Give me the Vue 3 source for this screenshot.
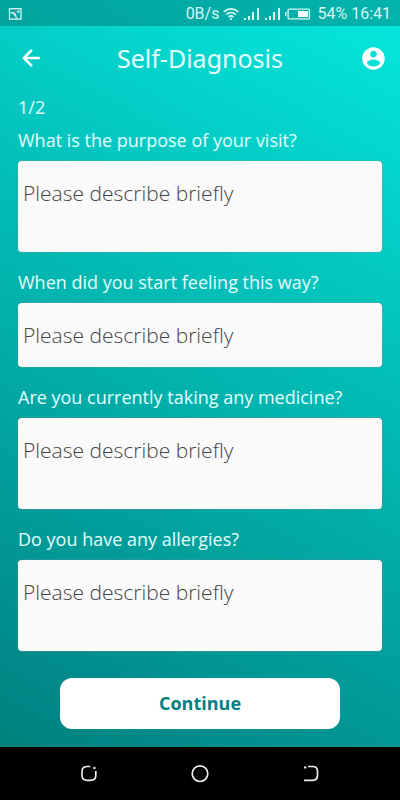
<script setup>
import { reactive } from 'vue'

const questions = reactive([
  { id: 'purpose', label: 'What is the purpose of your visit?', rows: 2, answer: '' },
  { id: 'start', label: 'When did you start feeling this way?', rows: 1, answer: '' },
  { id: 'medicine', label: 'Are you currently taking any medicine?', rows: 2, answer: '' },
  { id: 'allergies', label: 'Do you have any allergies?', rows: 2, answer: '' },
])
</script>

<template>
  <div class="screen">
    <div class="app">
      <div class="status">
        <svg class="shot" width="14" height="12" viewBox="0 0 14 12" fill="none" stroke="currentColor">
          <rect x="1.5" y="0.7" width="11.500" height="10.400" stroke-width="1.300" />
          <path d="M2.500 4.600h2.700c1.900.5 2.900 2.400 2.900 5.400M5 5l4.500 5.500M10.200 2.300v3M8.700 3.800h3" stroke-width="1.100" />
        </svg>
        <div class="status-right">
          <span>0B/s</span>
          <svg width="16" height="14" viewBox="0 0 16 14" fill="none" stroke="currentColor" stroke-width="1.700">
            <path d="M0.800 4.900C5 .9 11 .9 15.200 4.900M3.200 7.600c2.800-2.600 6.800-2.600 9.600 0M5.600 10.100c1.400-1.300 3.400-1.300 4.800 0" />
            <circle cx="8" cy="12.100" r="1.200" fill="currentColor" stroke="none" />
          </svg>
          <svg v-for="n in 2" :key="n" class="signal" width="17" height="14" viewBox="0 0 17 14" fill="currentColor">
            <path d="M1 11h2v2H1zM5 9h2v4H5zM9 5h2v8H9zM14 1h2v12h-2z" />
          </svg>
          <svg class="battery" width="26" height="12" viewBox="0 0 26 12" fill="currentColor">
            <path d="M0 4h1.500v4H0z" />
            <rect x="3.100" y="1.100" width="21.300" height="9.800" rx="1.200" fill="none" stroke="currentColor" stroke-width="1.400" />
            <path d="M13 3h10v6H13z" fill="#fff" />
          </svg>
          <span>54%</span>
          <span class="time">16:41</span>
        </div>
      </div>

      <header class="header">
        <button class="icon-button" type="button" aria-label="Back">
          <svg width="26" height="26" viewBox="0 0 24 24" fill="currentColor">
            <path stroke="currentColor" stroke-width="0.4" d="M20 11H7.830l5.590-5.590L12 4l-8 8 8 8 1.410-1.410L7.830 13H20v-2z" />
          </svg>
        </button>
        <h1>Self-Diagnosis</h1>
        <button class="icon-button account" type="button" aria-label="Account">
          <svg width="27" height="27" viewBox="0 0 24 24" fill="currentColor">
            <path d="M12 2C6.480 2 2 6.480 2 12s4.480 10 10 10 10-4.480 10-10S17.520 2 12 2zm0 3c1.660 0 3 1.340 3 3s-1.340 3-3 3-3-1.340-3-3 1.340-3 3-3zm0 14.200c-2.500 0-4.710-1.280-6-3.220.03-1.990 4-3.080 6-3.080 1.990 0 5.970 1.090 6 3.080-1.290 1.940-3.500 3.220-6 3.220z" />
          </svg>
        </button>
      </header>

      <form class="form" @submit.prevent>
        <p class="step">1/2</p>
        <div v-for="q in questions" :key="q.id" class="field">
          <label :for="q.id">{{ q.label }}</label>
          <textarea :id="q.id" v-model="q.answer" :rows="q.rows" placeholder="Please describe briefly"></textarea>
        </div>
        <button class="continue" type="submit">Continue</button>
      </form>
    </div>

    <nav class="nav">
      <button type="button" aria-label="Recent apps">
        <svg width="18" height="18" viewBox="0 0 18 18" fill="none" stroke="currentColor" stroke-width="1.700">
          <path d="M10.300 1.500H7.500Q2 1.500 2 6.500v4q0 4.800 5.500 4.800h2.800q5.500 0 5.500-4.800V6.100" />
          <circle cx="14.400" cy="2.900" r="1.200" fill="currentColor" stroke="none" />
        </svg>
      </button>
      <button type="button" aria-label="Home">
        <svg width="18" height="18" viewBox="0 0 18 18" fill="none" stroke="currentColor" stroke-width="1.700">
          <circle cx="9" cy="8.700" r="7.800" />
        </svg>
      </button>
      <button type="button" aria-label="Back">
        <svg width="18" height="18" viewBox="0 0 18 18" fill="none" stroke="currentColor" stroke-width="1.700">
          <path d="M6 1.500h4.500q5 0 5 5v3.800q0 5-5 5H2" />
          <circle cx="3.200" cy="2.400" r="1.200" fill="currentColor" stroke="none" />
        </svg>
      </button>
    </nav>
  </div>
</template>

<style>
body {
  margin: 0;
}
</style>

<style scoped>
.screen {
  min-height: 100vh;
  display: flex;
  flex-direction: column;
  background: #000;
  font-family: "Open Sans", "Noto Sans", sans-serif;
  color: #e4fffd;
}
.app {
  flex: 1;
  display: flex;
  flex-direction: column;
  background: linear-gradient(208deg, #05e8de, #008080);
}
button {
  border: 0;
  padding: 0;
  background: none;
  color: inherit;
  font: inherit;
  cursor: pointer;
}
svg {
  display: block;
}
.status {
  box-sizing: border-box;
  height: 26px;
  padding: 2px 9px 0 8px;
  display: flex;
  align-items: center;
  justify-content: space-between;
  background: rgba(0, 60, 60, 0.3);
  font: 16px/24px Roboto, sans-serif;
  color: #d5f7f5;
}
.status-right {
  display: flex;
  align-items: center;
  gap: 4px;
}
.battery {
  margin-right: 2px;
}
.header {
  display: grid;
  grid-template-columns: 1fr auto 1fr;
  align-items: center;
  height: 64px;
  padding: 0 13px;
}
.icon-button {
  justify-self: start;
  padding: 0 5px;
  color: #fff;
}
.account {
  justify-self: end;
  padding: 0;
}
h1 {
  margin: 0;
  font-family: "Noto Sans", sans-serif;
  font-size: 25px;
  line-height: 34px;
  font-weight: 400;
}
.form {
  display: flex;
  flex-direction: column;
  padding: 4px 18px 17px;
}
.step {
  margin: 0;
  font-size: 18px;
  line-height: 26px;
}
.field {
  display: flex;
  flex-direction: column;
  gap: 8px;
  margin-bottom: 17px;
}
.step + .field {
  margin-top: 7px;
}
label {
  font-size: 18px;
  line-height: 26px;
}
textarea {
  box-sizing: border-box;
  width: 100%;
  min-height: 64px;
  padding: 18px 5px 17px;
  border: 0;
  border-radius: 4px;
  outline: 0;
  resize: none;
  overflow: hidden;
  background: #fafafa;
  box-shadow: 0 0 2px #7d8f8d;
  font: 300 21px/28px "Open Sans", "Noto Sans", sans-serif;
  color: #333;
}
textarea::placeholder {
  color: #444;
  opacity: 1;
}
.continue {
  align-self: center;
  width: 280px;
  max-width: 100%;
  margin-top: 10px;
  padding: 12px;
  border-radius: 12px;
  background: #fff;
  color: #008080;
  font-size: 18px;
  line-height: 27px;
  font-weight: 700;
}
.nav {
  display: flex;
  justify-content: center;
  align-items: center;
  gap: 93px;
  height: 53px;
  color: #eee;
}
</style>
